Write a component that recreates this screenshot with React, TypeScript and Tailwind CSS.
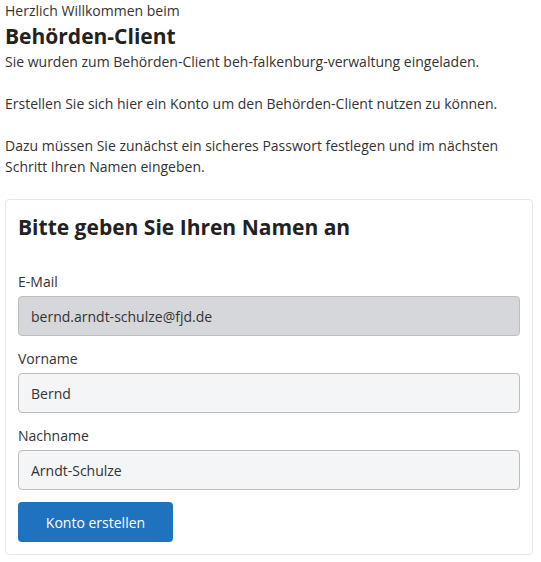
import { useState } from "react";

const font = { fontFamily: '"Open Sans", "Noto Sans", sans-serif' };

function Field({
  label,
  value,
  disabled,
  onChange,
}: {
  label: string;
  value: string;
  disabled?: boolean;
  onChange?: (v: string) => void;
}) {
  return (
    <label className="block">
      <span className="block text-[14px] leading-[21px] text-[#333]">{label}</span>
      <input
        value={value}
        disabled={disabled}
        onChange={(e) => onChange?.(e.target.value)}
        className={`mt-[4px] block h-[40px] w-full rounded-[4px] border border-[#bdbdbd] px-[12px] text-[14px] text-[#333] outline-none ${
          disabled ? "bg-[#d6d7db]" : "bg-[#f4f5f7]"
        }`}
      />
    </label>
  );
}

export default function App() {
  const [firstName, setFirstName] = useState("Bernd");
  const [lastName, setLastName] = useState("Arndt-Schulze");

  return (
    <div style={font} className="min-h-[562px] bg-white pl-[5px] pr-[8px] text-[#333]">
      {/* Intro */}
      <div className="text-[14px] leading-[21px]">
        <p>Herzlich Willkommen beim</p>
        <h1 className="text-[21px] font-bold leading-[30px] text-[#222]">Behörden-Client</h1>
        <p>Sie wurden zum Behörden-Client beh-falkenburg-verwaltung eingeladen.</p>
        <p className="mt-[21px]">Erstellen Sie sich hier ein Konto um den Behörden-Client nutzen zu können.</p>
        <p className="mt-[21px]">
          Dazu müssen Sie zunächst ein sicheres Passwort festlegen und im nächsten Schritt Ihren Namen eingeben.
        </p>
      </div>

      {/* Name form */}
      <div className="mt-[22px] rounded-[4px] border border-[#e6e7ea] px-[12px] pb-[12px] pt-[12px]">
        <h2 className="text-[21px] font-bold leading-[30px] text-[#222]">Bitte geben Sie Ihren Namen an</h2>

        <div className="mt-[29px]">
          <Field label="E-Mail" value="bernd.arndt-schulze@fjd.de" disabled />
        </div>
        <div className="mt-[12px]">
          <Field label="Vorname" value={firstName} onChange={setFirstName} />
        </div>
        <div className="mt-[12px]">
          <Field label="Nachname" value={lastName} onChange={setLastName} />
        </div>

        <button className="mt-[12px] h-[40px] w-[155px] rounded-[4px] bg-[#1f72be] text-[14px] text-white">
          Konto erstellen
        </button>
      </div>
    </div>
  );
}
